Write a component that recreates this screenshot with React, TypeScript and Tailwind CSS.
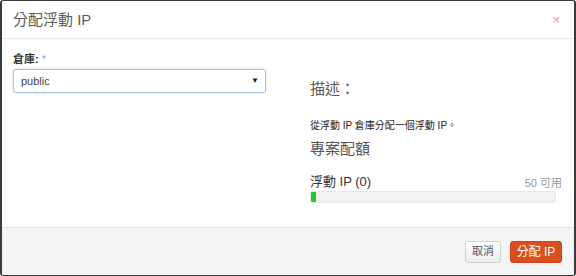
import React from "react";

const font = { fontFamily: '"Liberation Sans", "Noto Sans CJK TC", sans-serif' };

export default function App() {
  return (
    <div
      className="w-[576px] h-[276px] bg-white border-[#3a3a3a] border-t border-b border-l-2 border-r-2 rounded-[3px] flex flex-col overflow-hidden"
      style={font}
    >
      {/* Header */}
      <div className="h-[38px] shrink-0 border-b border-[#ebebeb] flex items-center justify-between pl-[11px] pr-[14px]">
        <h3 className="text-[15px] text-[#5a5a5a] leading-none">分配浮動 IP</h3>
        <span className="text-[13px] font-bold text-[#f1b5b5] leading-none">×</span>
      </div>

      {/* Body */}
      <div className="flex-1 flex pl-[11px]">
        <div className="w-[253px] pt-[12px]">
          <label className="block text-[11px] font-bold leading-[16px] text-[#333]">
            倉庫: <span className="text-[#7fa6d6] font-normal">*</span>
          </label>
          <div className="mt-[2px] h-[24px] border border-[#a8c0e4] rounded-[3px] flex items-center justify-between pl-[7px] pr-[6px] shadow-[0_0_3px_rgba(102,153,221,0.35)]">
            <span className="text-[11px] text-[#444]">public</span>
            <span className="text-[8px] text-[#222]">▼</span>
          </div>
        </div>

        <div className="ml-[44px] w-[252px] pt-[40px]">
          <h4 className="text-[15px] leading-[20px] text-[#555]">描述：</h4>
          <p className="mt-[20px] text-[10px] leading-[14px] text-[#222]">
            從浮動 IP 倉庫分配一個浮動 IP。
          </p>
          <h4 className="mt-[6px] text-[15px] leading-[20px] text-[#555]">專案配額</h4>
          <div className="mt-[15px] flex items-end justify-between">
            <span className="text-[13px] leading-[16px] text-[#333]">浮動 IP (0)</span>
            <span className="text-[11px] leading-[14px] text-[#999]">50 可用</span>
          </div>
          <div className="mt-[1px] w-[246px] h-[12px] bg-[#f2f2f2] border border-[#e6e6e6] rounded-[2px] overflow-hidden flex">
            <div className="w-[5px] h-full bg-[#22c722]" />
          </div>
        </div>
      </div>

      {/* Footer */}
      <div className="h-[48px] shrink-0 bg-[#f4f4f4] border-t border-[#e2e2e2] flex items-center justify-end gap-[9px] pr-[12px]">
        <button className="w-[36px] h-[22px] rounded-[3px] border border-[#cfcfcf] bg-gradient-to-b from-white to-[#ececec] text-[11px] text-[#555]">
          取消
        </button>
        <button className="w-[52px] h-[22px] rounded-[3px] bg-[#d9501e] border border-[#c4461a] text-[12px] text-white">
          分配 IP
        </button>
      </div>
    </div>
  );
}
